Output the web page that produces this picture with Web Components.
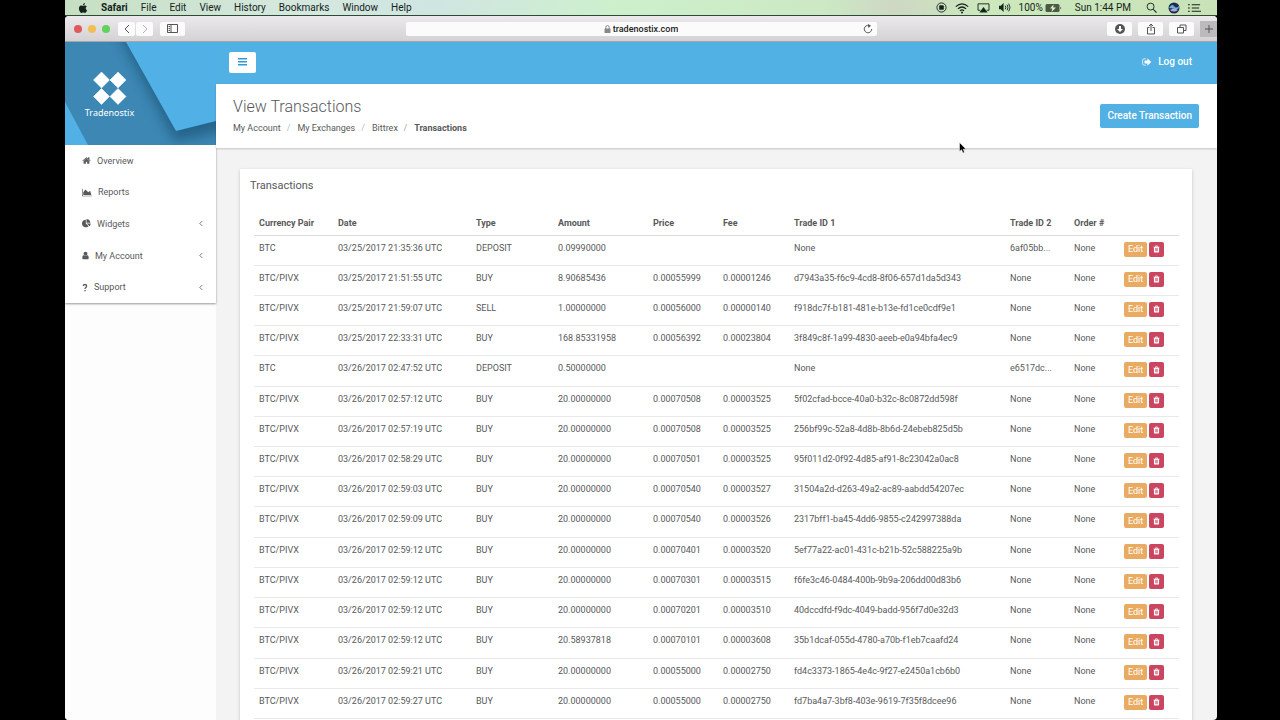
<!DOCTYPE html>
<html lang="en">
<head>
  <meta charset="utf-8">
  <title>Tradenostix - View Transactions</title>
  <style>
    html,
    body {
      height: 100%;
      margin: 0;
      background: #000;
    }

    body {
      font-family: Roboto, "Liberation Sans", sans-serif;
      font-size: 9px;
      line-height: 12px;
      color: #58595b;
      overflow: hidden;
    }
  </style>
</head>
<body>

  <mac-desktop>
    <menu-bar slot="menu"></menu-bar>
    <browser-window address="tradenostix.com">
      <side-bar slot="side">
        <nav-item icon="home">Overview</nav-item>
        <nav-item icon="area">Reports</nav-item>
        <nav-item icon="pie" expandable>Widgets</nav-item>
        <nav-item icon="user" expandable>My Account</nav-item>
        <nav-item icon="question" expandable>Support</nav-item>
      </side-bar>
      <top-bar></top-bar>
      <page-heading>
        <span slot="title">View Transactions</span>
        <span slot="action">Create Transaction</span>
      </page-heading>
      <content-card>
        <span slot="title">Transactions</span>
        <transaction-table></transaction-table>
      </content-card>
    </browser-window>
    <mouse-pointer slot="pointer"></mouse-pointer>
  </mac-desktop>

  <script>
    (function () {

      const icons = {
        home: ['0 0 1792 1792', '<path d="M1472 992v480q0 26-19 45t-45 19h-384v-384h-256v384h-384q-26 0-45-19t-19-45v-480q0-1 .5-3t.5-3l575-474 575 474q1 2 1 6zm223-69l-62 74q-8 9-21 11h-3q-13 0-21-7l-692-577-692 577q-12 8-24 7-13-2-21-11l-62-74q-8-10-7-23.5t11-21.5l719-599q32-26 76-26t76 26l244 204v-195q0-14 9-23t23-9h192q14 0 23 9t9 23v408l219 182q10 8 11 21.5t-7 23.5z"/>'],
        area: ['0 0 2048 1792', '<path d="M2048 1536v128h-2048v-1536h128v1408h1920zm-384-1024l256 896h-1664v-576l448-576 576 576z"/>'],
        pie: ['0 0 1792 1792', '<path d="M768 890l546 546q-106 108-247.5 168t-298.5 60q-209 0-385.5-103t-279.5-279.5-103-385.5 103-385.5 279.5-279.5 385.5-103v762zm187 6h773q0 157-60 298.5t-168 247.5zm709-128h-768v-768q209 0 385.5 103t279.5 279.5 103 385.5z"/>'],
        user: ['256 0 1280 1792', '<path d="M1536 1399q0 109-62.5 187t-150.5 78h-854q-88 0-150.5-78t-62.5-187q0-85 8.5-160.5t31.5-152 58.5-131 94-89 134.5-34.5q131 128 313 128t313-128q76 0 134.5 34.5t94 89 58.5 131 31.5 152 8.5 160.5zm-256-887q0 159-112.5 271.5t-271.5 112.5-271.5-112.5-112.5-271.5 112.5-271.5 271.5-112.5 271.5 112.5 112.5 271.5z"/>'],
        question: ['0 0 10 18', '<path d="M1.500 6Q2 3 5 3t3.300 3Q8.300 8 6.500 9T5 12M5 14v2.600" fill="none" stroke="currentColor" stroke-width="2.600"/>'],
        trash: ['192 0 1408 1792', '<path d="M704 1376v-704q0-14-9-23t-23-9h-64q-14 0-23 9t-9 23v704q0 14 9 23t23 9h64q14 0 23-9t9-23zm256 0v-704q0-14-9-23t-23-9h-64q-14 0-23 9t-9 23v704q0 14 9 23t23 9h64q14 0 23-9t9-23zm256 0v-704q0-14-9-23t-23-9h-64q-14 0-23 9t-9 23v704q0 14 9 23t23 9h64q14 0 23-9t9-23zm-544-992h448l-48-117q-7-9-17-11h-317q-10 2-17 11zm928 32v64q0 14-9 23t-23 9h-96v948q0 83-47 143.5t-113 60.5h-832q-66 0-113-58.5t-47-141.5v-952h-96q-14 0-23-9t-9-23v-64q0-14 9-23t23-9h309l70-167q15-37 54-63t79-26h320q40 0 79 26t54 63l70 167h309q14 0 23 9t9 23z"/>'],
        signout: ['0 0 1792 1792', '<path d="M704 1440q0 4 1 20t.5 26.5-3 23.5-10 19.5-20.5 6.5h-320q-119 0-203.5-84.5t-84.5-203.5v-704q0-119 84.5-203.5t203.5-84.5h320q13 0 22.5 9.5t9.5 22.5q0 4 1 20t.5 26.5-3 23.5-10 19.5-20.5 6.5h-320q-66 0-113 47t-47 113v704q0 66 47 113t113 47h312l11.5 1 11.5 3 8 5.5 7 9 2 13.5zm928-544q0 26-19 45l-544 544q-19 19-45 19t-45-19-19-45v-288h-448q-26 0-45-19t-19-45v-384q0-26 19-45t45-19h448v-288q0-26 19-45t45-19 45 19l544 544q19 19 19 45z"/>'],
        bars: ['0 0 9 8', '<path d="M0 0h9v1.500H0zM0 3h9v1.500H0zM0 6h9v1.500H0z"/>'],
        angle: ['0 0 5 8', '<path d="M4 1L1 4l3 3" fill="none" stroke="currentColor"/>'],
        apple: ['0 0 24 24', '<path d="M12.152 6.896c-.948 0-2.415-1.078-3.960-1.040-2.040.027-3.910 1.183-4.961 3.014-2.117 3.675-.546 9.103 1.519 12.090 1.013 1.454 2.208 3.090 3.792 3.039 1.520-.065 2.090-.987 3.935-.987 1.831 0 2.350.987 3.960.948 1.637-.026 2.676-1.480 3.676-2.948 1.156-1.688 1.636-3.325 1.662-3.415-.039-.013-3.182-1.221-3.220-4.857-.026-3.040 2.480-4.494 2.597-4.559-1.429-2.090-3.623-2.324-4.390-2.376-2-.156-3.675 1.090-4.610 1.090zM15.530 3.830c.843-1.012 1.400-2.427 1.245-3.830-1.207.052-2.662.805-3.532 1.818-.780.896-1.454 2.338-1.273 3.714 1.338.104 2.715-.688 3.559-1.701"/>'],
        record: ['0 0 12 12', '<circle cx="6" cy="6" r="5" fill="none" stroke="currentColor"/><rect x="3.500" y="3.500" width="5" height="5" rx="1"/>'],
        wifi: ['0 0 14 12', '<g fill="none" stroke="currentColor" stroke-width="1.200"><path d="M.8 4.600Q7-1 13.200 4.600M2.900 6.900q4.100-3.800 8.200 0M4.900 8.900q2.100-1.900 4.200 0"/></g><circle cx="7" cy="10.500" r="1"/>'],
        airplay: ['0 0 14 12', '<path d="M3.500 9H1V2h12v7h-2.500" fill="none" stroke="currentColor"/><path d="M7 5.500l4.500 6h-9z"/>'],
        volume: ['0 0 14 12', '<path d="M1 4h2l3-3v10L3 8H1z"/><path d="M7.800 4q1.400 2 0 4M9.800 3q2 3 0 6M11.600 1.800q2.800 4.200 0 8.400" fill="none" stroke="currentColor"/>'],
        battery: ['0 0 17 10', '<rect x=".5" y="1" width="14" height="8" rx="1.500" fill="#4a5a45"/><path d="M15.500 3.500q1.500 1.500 0 3z"/><path d="M8.500 1.500L5 5.500h2.300L6.500 9 11 4.500H8.300z" fill="#dcefd0"/>'],
        search: ['0 0 12 12', '<circle cx="5" cy="5" r="3.800" fill="none" stroke="currentColor"/><path d="M8 8l3.500 3.500" stroke="currentColor" stroke-width="1.200"/>'],
        siri: ['0 0 12 12', '<circle cx="6" cy="6" r="5.500" fill="#23284f"/><path d="M1 6q3-5 5-2t5 0q0 4-4 3t-6-1z" fill="#5bb8d8"/><path d="M2 8q4-3 8 0-4 3-8 0z" fill="#b9a4e0"/>'],
        list: ['0 0 14 10', '<path d="M0 1h2v1H0zM4 1h9v1H4zM0 4.500h2v1H0zM4 4.500h8v1H4zM0 8h2v1H0zM4 8h10v1H4z"/>'],
        back: ['0 0 6 10', '<path d="M5 1L1 5l4 4" fill="none" stroke="currentColor"/>'],
        forward: ['0 0 6 10', '<path d="M1 1l4 4-4 4" fill="none" stroke="currentColor"/>'],
        panel: ['0 0 11 9', '<path d="M.5.5h10v8H.5zM4 .5v8M1.500 2.500H3M1.500 4.500H3M1.500 6.500H3" fill="none" stroke="currentColor"/>'],
        lock: ['0 0 7 8', '<rect x=".5" y="3.500" width="6" height="4.500" rx=".5"/><path d="M1.800 4V2.500q0-2 1.700-2t1.700 2V4" fill="none" stroke="currentColor"/>'],
        reload: ['0 0 10 10', '<path d="M6 1.500A3.700 3.700 0 1 0 8.700 5" fill="none" stroke="currentColor"/><path d="M5 0l3 1.700L5.300 4z"/>'],
        download: ['0 0 10 10', '<circle cx="5" cy="5" r="5"/><path d="M4 2h2v3h2L5 8 2 5h2z" fill="#fff"/>'],
        share: ['0 0 10 12', '<path d="M3.500 4.500h-2v6.500h7V4.500h-2M5 8V1M3 3l2-2 2 2" fill="none" stroke="currentColor"/>'],
        tabs: ['0 0 10 10', '<path d="M.5 3.500h6v5.500h-6zM3 3.500V1h6v5.500H6.500" fill="none" stroke="currentColor"/>'],
        plus: ['0 0 8 8', '<path d="M4 0v8M0 4h8" stroke="currentColor"/>']
      };

      function svg(name, width, height) {
        return `<svg viewBox="${icons[name][0]}" width="${width}" height="${height}" fill="currentColor" aria-hidden="true">${icons[name][1]}</svg>`;
      }

      // shared by every shadow root
      const base = `
        :host, * { box-sizing: border-box; }
        svg { display: block; flex: none; }
        button { font: inherit; color: inherit; border: 0; padding: 0; background: none; cursor: pointer; }
        a { color: inherit; text-decoration: none; }
      `;

      function define(name, css, html) {
        window.customElements.define(name, class extends HTMLElement {
          connectedCallback() {
            if (this.shadowRoot) return;
            this.attachShadow({ mode: 'open' });
            const markup = typeof html === 'function' ? html(this) : html;
            this.shadowRoot.innerHTML = `<style>${base}${css}</style>${markup}`;
          }
        });
      }

      define('mac-desktop', `
        :host {
          display: flex;
          flex-direction: column;
          height: 100vh;
          padding: 0 63px 0 65px;
          overflow: hidden;
        }
      `, `
        <slot name="menu"></slot>
        <slot></slot>
        <slot name="pointer"></slot>
      `);

      define('menu-bar', `
        :host {
          display: flex;
          flex: none;
          align-items: center;
          justify-content: space-between;
          height: 16px;
          padding: 0 16px 0 13px;
          color: #14241c;
          font-size: 10px;
          line-height: 14px;
          background: linear-gradient(90deg, #c6dfc2, #d5e8df 20%, #d0e5e2 32%, #cdf0cc 48%, #cce8c4 66%, #ced8c4 72%, #cde8bd 80%, #c9e2b8);
          border-bottom: 1px solid #2c4a34;
        }
        nav, div { display: flex; align-items: center; }
        nav { gap: 13px; }
        div { gap: 8px; }
        b { font-weight: 700; }
        .power { display: flex; align-items: center; gap: 2px; }
        .clock { padding: 0 7px 0 5px; }
        .siri { padding-left: 3px; }
      `, `
        <nav aria-label="Menu">
          <button aria-label="Apple">${svg('apple', 10, 10)}</button>
          <button><b>Safari</b></button>
          <button>File</button>
          <button>Edit</button>
          <button>View</button>
          <button>History</button>
          <button>Bookmarks</button>
          <button>Window</button>
          <button>Help</button>
        </nav>
        <div>
          ${svg('record', 11, 11)}
          ${svg('wifi', 14, 12)}
          ${svg('airplay', 13, 11)}
          ${svg('volume', 13, 11)}
          <span class="power">100% ${svg('battery', 17, 10)}</span>
          <span class="clock">Sun 1:44 PM</span>
          ${svg('search', 11, 11)}
          <span class="siri">${svg('siri', 12, 12)}</span>
          ${svg('list', 13, 10)}
        </div>
      `);

      define('browser-window', `
        :host {
          display: flex;
          flex: 1;
          flex-direction: column;
          min-height: 0;
          overflow: hidden;
          border-radius: 4px;
          background: #f3f3f4;
        }
        header {
          display: flex;
          flex: none;
          align-items: center;
          height: 26px;
          background: linear-gradient(#ebe9eb, #d4d2d4);
          border-bottom: 1px solid #a7a5a7;
          color: #555;
        }
        .left, .right { display: flex; flex: 1; align-items: center; }
        .right { justify-content: flex-end; gap: 6px; }
        .light { width: 8px; height: 8px; margin-right: 6px; border-radius: 4px; background: #e0585b; }
        .light:first-child { margin-left: 9px; }
        .light.min { background: #f2bd53; }
        .light.max { background: #5fd35a; }
        header button {
          display: flex;
          align-items: center;
          justify-content: center;
          width: 25px;
          height: 14px;
          background: #fbfbfb;
          border-radius: 2px;
        }
        .steps { display: flex; gap: 1px; margin: 0 7px 0 2px; }
        .steps button { width: 17px; }
        .next { color: #b5b5b5; }
        .address {
          display: flex;
          flex: 0 1 471px;
          align-items: center;
          height: 14px;
          padding: 0 4px;
          background: #fbfbfb;
          border-radius: 2px;
        }
        label { display: flex; flex: 1; align-items: center; justify-content: center; gap: 2px; padding-left: 10px; color: #888; }
        input {
          field-sizing: content;
          padding: 0;
          border: 0;
          background: none;
          color: #222;
          font: inherit;
          font-weight: 500;
        }
        .address button { width: 10px; }
        header .tab {
          align-self: flex-end;
          width: 17px;
          height: 16px;
          background: #bcbabc;
          border-radius: 0;
        }
        .page { display: flex; flex: 1; align-items: stretch; min-height: 0; }
        main { flex: 1; min-width: 0; }
      `, el => `
        <header>
          <div class="left">
            <i class="light"></i><i class="light min"></i><i class="light max"></i>
            <span class="steps">
              <button aria-label="Back">${svg('back', 6, 10)}</button>
              <button class="next" aria-label="Forward">${svg('forward', 6, 10)}</button>
            </span>
            <button aria-label="Show sidebar">${svg('panel', 11, 9)}</button>
          </div>
          <div class="address">
            <label>${svg('lock', 7, 8)}<input type="text" aria-label="Address" value="${el.getAttribute('address')}"></label>
            <button aria-label="Reload">${svg('reload', 10, 10)}</button>
          </div>
          <div class="right">
            <button aria-label="Downloads">${svg('download', 10, 10)}</button>
            <button aria-label="Share">${svg('share', 10, 12)}</button>
            <button aria-label="Show all tabs">${svg('tabs', 10, 10)}</button>
            <button class="tab" aria-label="New tab">${svg('plus', 8, 8)}</button>
          </div>
        </header>
        <div class="page">
          <slot name="side"></slot>
          <main><slot></slot></main>
        </div>
      `);

      define('side-bar', `
        :host { display: block; flex: none; width: 151px; background: #fdfdfe; }
        .brand { display: block; }
        .brand svg { width: 100%; height: auto; }
        .brand text { font: 9px "Noto Sans", "Open Sans", sans-serif; fill: #fff; }
        nav {
          display: flex;
          flex-direction: column;
          min-height: 158px;
          background: #fff;
          box-shadow: 0 1px 2px rgba(0, 0, 0, 0.4);
        }
      `, `
        <a class="brand" href="#" aria-label="Tradenostix home">
          <svg viewBox="0 0 151 103">
            <defs>
              <filter id="soft" x="-20%" y="-20%" width="140%" height="140%">
                <feGaussianBlur stdDeviation="6"/>
              </filter>
            </defs>
            <rect width="151" height="103" fill="#3d87b5"/>
            <path d="M52 -10l58 110 60-14V-10z" fill="#1f5678" opacity=".7" filter="url(#soft)"/>
            <path d="M61 0l50 89 40-10V0z" fill="#51b0e6"/>
            <path d="M0 60l23 43H0z" fill="#51b0e6"/>
            <path d="M36.500 30l8 8-8 8-8-8zM53 30l8 8-8 8-8-8zM36.500 46.500l8 8-8 8-8-8zM53 46.500l8 8-8 8-8-8z" fill="#fff" stroke="#fff" stroke-width=".5" stroke-linejoin="round"/>
            <text x="44.500" y="74" text-anchor="middle">Tradenostix</text>
          </svg>
        </a>
        <nav><slot></slot></nav>
      `);

      const navSizes = { home: [9, 9], area: [10, 9], pie: [9, 9], user: [7, 9], question: [6, 9] };

      define('nav-item', `
        :host { display: flex; flex: 1; }
        a { display: flex; flex: 1; align-items: center; gap: 6px; padding: 0 13px 0 17px; }
        .angle { margin-left: auto; }
      `, el => `
        <a href="#">
          ${svg(el.getAttribute('icon'), ...navSizes[el.getAttribute('icon')])}
          <slot></slot>
          ${el.hasAttribute('expandable') ? `<span class="angle">${svg('angle', 4, 7)}</span>` : ''}
        </a>
      `);

      define('top-bar', `
        :host {
          display: flex;
          align-items: center;
          justify-content: space-between;
          height: 42px;
          padding: 0 25px 2px 13px;
          background: #51b0e4;
          color: #fff;
        }
        button {
          display: flex;
          align-items: center;
          justify-content: center;
          width: 27px;
          height: 21px;
          border-radius: 2px;
          background: #fff;
          color: #2f9bd6;
        }
        a { display: flex; align-items: center; gap: 6px; font-size: 10px; font-weight: 500; }
      `, `
        <button aria-label="Toggle navigation">${svg('bars', 9, 8)}</button>
        <a href="#">${svg('signout', 10, 10)}Log out</a>
      `);

      define('page-heading', `
        :host {
          display: flex;
          align-items: center;
          justify-content: space-between;
          padding: 13px 18px 14px 17px;
          background: #fff;
          box-shadow: 0 1px 2px rgba(0, 0, 0, 0.2);
        }
        h1 { margin: 0 0 5px; font-size: 16px; font-weight: 300; line-height: 20px; }
        ol { display: flex; margin: 0; padding: 0; list-style: none; }
        li + li::before { content: "/"; padding: 0 7px 0 6px; color: #bbb; }
        li:last-child { font-weight: 700; }
        button {
          height: 24px;
          padding: 0 7px;
          border-radius: 2px;
          background: #51b0e4;
          color: #fff;
          font-size: 10px;
          font-weight: 500;
        }
      `, `
        <div>
          <h1><slot name="title"></slot></h1>
          <ol>
            <li><a href="#">My Account</a></li>
            <li><a href="#">My Exchanges</a></li>
            <li><a href="#">Bittrex</a></li>
            <li>Transactions</li>
          </ol>
        </div>
        <button><slot name="action"></slot></button>
      `);

      define('content-card', `
        :host {
          display: block;
          margin: 21px 25px 0 24px;
          padding: 9px 13px 24px 14px;
          background: #fff;
          box-shadow: 0 1px 3px rgba(0, 0, 0, 0.2);
        }
        h2 { margin: 0 0 17px -4px; font-size: 11px; font-weight: 400; line-height: 16px; }
      `, `
        <h2><slot name="title"></slot></h2>
        <slot></slot>
      `);

      const columns = ['Currency Pair', 'Date', 'Type', 'Amount', 'Price', 'Fee', 'Trade ID 1', 'Trade ID 2', 'Order #', ''];
      const widths = [79, 138, 82, 95, 70, 71, 0, 64, 50, 60];

      const transactions = [
        ['BTC', '03/25/2017 21:35:36 UTC', 'DEPOSIT', '0.09990000', '', '', 'None', '6af05bb...', 'None'],
        ['BTC/PIVX', '03/25/2017 21:51:55 UTC', 'BUY', '8.90685436', '0.00055999', '0.00001246', 'd7943a35-f6c9-4cd8-8f06-657d1da5d343', 'None', 'None'],
        ['BTC/PIVX', '03/25/2017 21:59:07 UTC', 'SELL', '1.00000000', '0.00056000', '0.00000140', 'f918dc7f-b181-481e-b13e-fd1ce0cdf9e1', 'None', 'None'],
        ['BTC/PIVX', '03/25/2017 22:33:31 UTC', 'BUY', '168.85331958', '0.00056392', '0.00023804', '3f849c8f-1a99-4830-aeeb-e0a94bfa4ec9', 'None', 'None'],
        ['BTC', '03/26/2017 02:47:52 UTC', 'DEPOSIT', '0.50000000', '', '', 'None', 'e6517dc...', 'None'],
        ['BTC/PIVX', '03/26/2017 02:57:12 UTC', 'BUY', '20.00000000', '0.00070508', '0.00003525', '5f02cfad-bcce-40a0-b32c-8c0872dd598f', 'None', 'None'],
        ['BTC/PIVX', '03/26/2017 02:57:19 UTC', 'BUY', '20.00000000', '0.00070508', '0.00003525', '256bf99c-52a8-4d8b-8b6d-24ebeb825d5b', 'None', 'None'],
        ['BTC/PIVX', '03/26/2017 02:58:29 UTC', 'BUY', '20.00000000', '0.00070501', '0.00003525', '95f011d2-0f92-4d85-af91-8c23042a0ac8', 'None', 'None'],
        ['BTC/PIVX', '03/26/2017 02:59:03 UTC', 'BUY', '20.00000000', '0.00070540', '0.00003527', '31504a2d-d263-49a2-ac89-aabdd54207ec', 'None', 'None'],
        ['BTC/PIVX', '03/26/2017 02:59:09 UTC', 'BUY', '20.00000000', '0.00070540', '0.00003526', '2317bff1-ba45-4dd6-9855-c242997388da', 'None', 'None'],
        ['BTC/PIVX', '03/26/2017 02:59:12 UTC', 'BUY', '20.00000000', '0.00070401', '0.00003520', '5ef77a22-ac01-431c-b21b-52c588225a9b', 'None', 'None'],
        ['BTC/PIVX', '03/26/2017 02:59:12 UTC', 'BUY', '20.00000000', '0.00070301', '0.00003515', 'f6fe3c46-0484-400b-9b9a-206dd00d83b6', 'None', 'None'],
        ['BTC/PIVX', '03/26/2017 02:59:12 UTC', 'BUY', '20.00000000', '0.00070201', '0.00003510', '40dccdfd-f9dc-4049-badd-956f7d0e32d3', 'None', 'None'],
        ['BTC/PIVX', '03/26/2017 02:59:12 UTC', 'BUY', '20.58937818', '0.00070101', '0.00003608', '35b1dcaf-055d-4780-a70b-f1eb7caafd24', 'None', 'None'],
        ['BTC/PIVX', '03/26/2017 02:59:21 UTC', 'BUY', '20.00000000', '0.00055000', '0.00002750', 'fd4c3373-1865-4e4c-9f27-e2450a1cb6b0', 'None', 'None'],
        ['BTC/PIVX', '03/26/2017 02:59:27 UTC', 'BUY', '20.00000000', '0.00055000', '0.00002750', 'fd7ba4a7-3bf8-403e-9619-7f35f8dcee96', 'None', 'None']
      ];

      define('transaction-table', `
        :host { display: block; }
        table { width: 100%; height: 508px; table-layout: fixed; border-collapse: collapse; }
        th, td {
          padding: 6px 0 0 5px;
          border-bottom: 1px solid #e9e9eb;
          text-align: left;
          vertical-align: top;
          white-space: nowrap;
        }
        th { height: 24px; border-bottom-color: #dcdcde; font-weight: 700; }
        td { height: 30px; }
        .actions { display: flex; gap: 2px; }
        .actions button {
          display: flex;
          align-items: center;
          justify-content: center;
          height: 15px;
          padding: 0 4px;
          border-radius: 2px;
          color: #fff;
        }
        .edit { background: #e9ab61; }
        .delete { background: #cb4560; }
      `, `
        <table>
          <colgroup>${widths.map(w => `<col${w ? ` style="width: ${w}px"` : ''}>`).join('')}</colgroup>
          <thead>
            <tr>${columns.map(c => `<th scope="col">${c}</th>`).join('')}</tr>
          </thead>
          <tbody>
            ${transactions.map(row => `
              <tr>
                ${row.map(cell => `<td>${cell}</td>`).join('')}
                <td>
                  <div class="actions">
                    <button class="edit">Edit</button>
                    <button class="delete" aria-label="Delete">${svg('trash', 7, 8)}</button>
                  </div>
                </td>
              </tr>`).join('')}
          </tbody>
        </table>
      `);

      define('mouse-pointer', `
        :host { position: absolute; left: 959px; top: 142px; }
      `, `
        <svg viewBox="0 0 8 12" width="8" height="12"><path d="M.5.5v9l2-1.800 1.500 3.300 1.500-.7L4.200 7.200H7z" fill="#000" stroke="#fff" stroke-width=".5"/></svg>
      `);

    })();
  </script>
</body>
</html>
